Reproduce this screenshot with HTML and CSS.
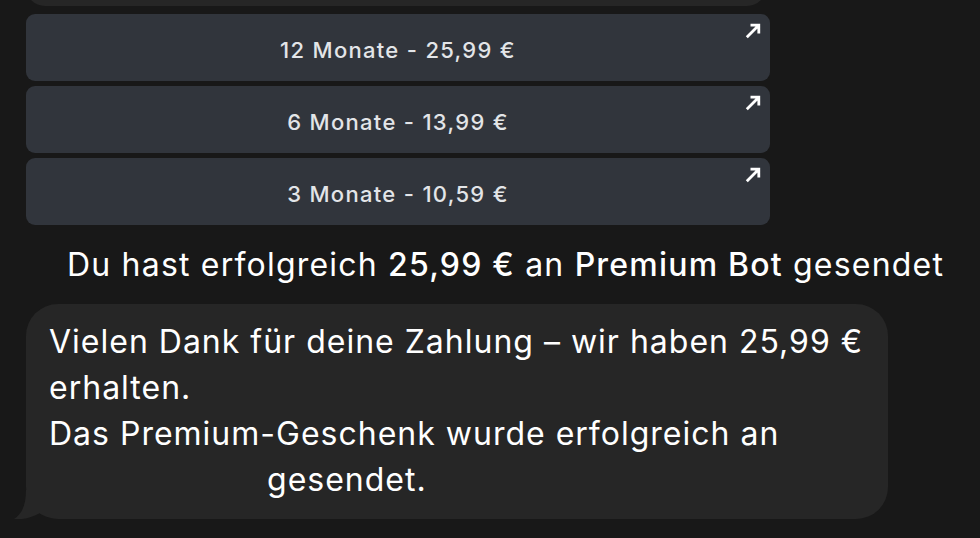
FILE: index.html
```html
<!DOCTYPE html>
<html lang="de">
<head>
    <meta charset="UTF-8">
    <meta name="viewport" content="width=device-width, initial-scale=1.0">
    <title>Premium Bot</title>
    <link rel="stylesheet" href="styles.css">
</head>
<body>
    <div class="chat">
        <div class="prev-bubble"></div>

        <div class="buttons">
            <button class="btn">12 Monate - 25,99 €
                <svg class="arrow" viewBox="0 0 16 16"><path d="M1.8 14.2 L13.5 2.5 M5.5 2.2 H13.8 V10.5"/></svg>
            </button>
            <button class="btn">6 Monate - 13,99 €
                <svg class="arrow" viewBox="0 0 16 16"><path d="M1.8 14.2 L13.5 2.5 M5.5 2.2 H13.8 V10.5"/></svg>
            </button>
            <button class="btn">3 Monate - 10,59 €
                <svg class="arrow" viewBox="0 0 16 16"><path d="M1.8 14.2 L13.5 2.5 M5.5 2.2 H13.8 V10.5"/></svg>
            </button>
        </div>

        <p class="service">Du hast erfolgreich <b>25,99 €</b> an <b>Premium Bot</b> gesendet</p>

        <div class="bubble">
            <p>Vielen Dank für deine Zahlung – wir haben 25,99 €<br>erhalten.<br>Das Premium-Geschenk wurde erfolgreich an<br><span class="hidden-name"></span>gesendet.</p>
            <svg class="tail" viewBox="0 0 30 29"><path d="M12 0 C12 15 8 24 0 29 C10 30 19 27 26 23 L26 0 Z"/></svg>
        </div>
    </div>
</body>
</html>
```

FILE: styles.css
```css
body {
    margin: 0;
    padding: 0;
    font-family: Inter, "Noto Sans", sans-serif;
    color: #fff;
    background: #181818;
    overflow: hidden;
}

.chat {
    padding: 0 0 0 26px;
}

.prev-bubble {
    width: 740px;
    height: 38px;
    margin-top: -32px;
    background: #262626;
    border-radius: 32px;
}

.buttons {
    display: flex;
    flex-direction: column;
    gap: 5px;
    margin-top: 8px;
    width: 744px;
}

.btn {
    position: relative;
    height: 67px;
    padding: 4px 0 0 0;
    border: none;
    border-radius: 9px;
    background: #31353c;
    color: #e3e5e8;
    font-family: Inter, "Noto Sans", sans-serif;
    font-size: 22px;
    font-weight: 500;
    letter-spacing: 1.3px;
    text-align: center;
}

.arrow {
    position: absolute;
    top: 9px;
    right: 9px;
    width: 16px;
    height: 16px;
    fill: none;
    stroke: #fff;
    stroke-width: 2.8;
}

.service {
    margin: 0;
    padding: 20px 0 0 41px;
    height: 59px;
    font-size: 32px;
    line-height: 40px;
    letter-spacing: 1.2px;
    white-space: nowrap;
}

.service b {
    font-weight: 500;
}

.bubble {
    position: relative;
    width: 862px;
    box-sizing: border-box;
    padding: 15px 0 16px 23px;
    background: #262626;
    border-radius: 32px;
}

.bubble p {
    margin: 0;
    font-size: 32px;
    line-height: 46px;
    letter-spacing: 1px;
    white-space: nowrap;
}

.hidden-name {
    display: inline-block;
    width: 218px;
}

.tail {
    position: absolute;
    left: -12px;
    bottom: 0;
    width: 30px;
    height: 29px;
    fill: #262626;
}
```
